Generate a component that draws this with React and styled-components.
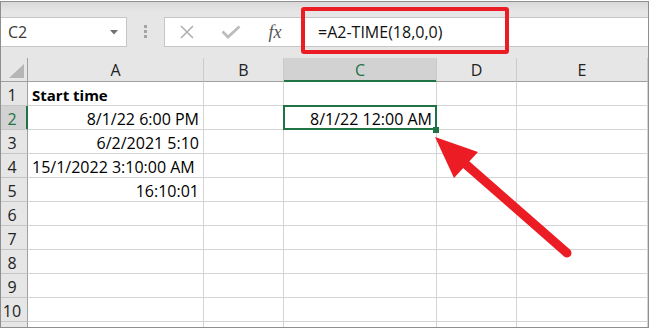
import React from "react";
import styled, { createGlobalStyle, css } from "styled-components";

const Global = createGlobalStyle`
  html, body { margin: 0; padding: 0; background: #fff; overflow: hidden; }
`;

const GREEN = "#217346";
const RED = "#ec1c24";

const Page = styled.div`
  position: relative;
  width: 649px;
  height: 328px;
  padding-top: 1px;
  box-sizing: border-box;
  font-family: "Open Sans", "Liberation Sans", sans-serif;
`;

const Window = styled.div`
  height: 327px;
  border: 1px solid #8e8e8e;
  box-sizing: border-box;
  display: flex;
  flex-direction: column;
  overflow: hidden;
  background: #e6e6e6;
`;

const FormulaBar = styled.div`
  position: relative;
  flex: none;
  height: 56px;
  box-sizing: border-box;
  padding-top: 15px;
  display: flex;
  align-items: flex-start;
  background: linear-gradient(#d9d9d9, #e6e6e6 10px);
`;

const NameBox = styled.div`
  width: 126px;
  height: 30px;
  box-sizing: border-box;
  background: #fff;
  border: 1px solid #c6c6c6;
  border-left: none;
  display: flex;
  align-items: center;
  justify-content: space-between;
  padding: 0 8px 0 7px;
  font-size: 16px;
  color: #3a3a3a;
`;

const Dots = styled.div`
  margin: 8px 0 0 17px;
  display: flex;
  flex-direction: column;
  gap: 2px;
  span {
    width: 3px;
    height: 3px;
    background: #a3a3a3;
  }
`;

const FormulaBox = styled.div`
  flex: 1;
  margin-left: 17px;
  height: 30px;
  box-sizing: border-box;
  background: #fff;
  border: 1px solid #c6c6c6;
  border-right: none;
  display: flex;
  align-items: center;
`;

const IconSlot = styled.div`
  width: 44px;
  height: 28px;
  display: flex;
  align-items: center;
  justify-content: center;
  flex: none;
`;

const Fx = styled.span`
  font-family: "Liberation Serif", serif;
  font-style: italic;
  font-size: 18px;
  color: #555;
  line-height: 1;
`;

const FormulaText = styled.div`
  padding-left: 21px;
  font-size: 16px;
  line-height: 28px;
  color: #111;
`;

const Callout = styled.div`
  position: absolute;
  left: 300px;
  top: 5px;
  width: 208px;
  height: 47px;
  box-sizing: border-box;
  border: 4px solid ${RED};
  border-radius: 3px;
  pointer-events: none;
`;

const Sheet = styled.div`
  flex: 1;
  overflow: hidden;
  display: grid;
  grid-template-columns: 27px 176px 80px 153px 80px 1fr;
  grid-auto-rows: 24px;
  background: #fff;
`;

const Corner = styled.div`
  background: #e6e6e6;
  border-right: 1px solid #a0a0a0;
  border-bottom: 1px solid #a0a0a0;
  display: flex;
  align-items: flex-end;
  justify-content: flex-end;
  padding: 0 3px 3px 0;
`;

const ColHead = styled.div`
  background: ${(p) => (p.$active ? "#d2d2d2" : "#e6e6e6")};
  border-right: 1px solid #cacaca;
  border-bottom: 1px solid ${(p) => (p.$active ? GREEN : "#a0a0a0")};
  box-shadow: ${(p) => (p.$active ? `inset 0 -1px 0 ${GREEN}` : "none")};
  display: flex;
  align-items: flex-end;
  justify-content: center;
  padding-bottom: 1px;
  font-size: 16px;
  line-height: 20px;
  color: ${(p) => (p.$active ? GREEN : "#222")};
`;

const RowHead = styled.div`
  background: ${(p) => (p.$active ? "#d2d2d2" : "#e6e6e6")};
  border-right: 1px solid ${(p) => (p.$active ? GREEN : "#a0a0a0")};
  border-bottom: 1px solid #c6c6c6;
  box-shadow: ${(p) => (p.$active ? `inset -1px 0 0 ${GREEN}` : "none")};
  display: flex;
  align-items: flex-end;
  justify-content: center;
  padding-right: 4px;
  font-size: 16px;
  line-height: 20px;
  color: ${(p) => (p.$active ? GREEN : "#222")};
`;

const Cell = styled.div`
  position: relative;
  border-right: 1px solid #d4d4d4;
  border-bottom: 1px solid #d4d4d4;
  display: flex;
  align-items: flex-end;
  justify-content: ${(p) => (p.$align === "right" ? "flex-end" : "flex-start")};
  padding: 0 4px;
  font-size: ${(p) => (p.$bold ? "15px" : "16px")};
  font-weight: ${(p) => (p.$bold ? 700 : 400)};
  line-height: 20px;
  color: #000;
  white-space: nowrap;
  ${(p) =>
    p.$selected &&
    css`
      z-index: 2;
      &::after {
        content: "";
        position: absolute;
        top: -1px;
        left: -1px;
        right: -1px;
        bottom: -1px;
        border: 2px solid ${GREEN};
      }
    `}
`;

const FillHandle = styled.span`
  position: absolute;
  right: -3px;
  bottom: -4px;
  width: 6px;
  height: 6px;
  background: ${GREEN};
  z-index: 3;
`;

const ArrowLayer = styled.svg`
  position: absolute;
  left: 0;
  top: 0;
  width: 649px;
  height: 328px;
  pointer-events: none;
`;

const columns = ["A", "B", "C", "D", "E"];

const data = {
  1: { A: { text: "Start time", bold: true } },
  2: { A: { text: "8/1/22 6:00 PM", align: "right" }, C: { text: "8/1/22 12:00 AM", align: "right", selected: true } },
  3: { A: { text: "6/2/2021 5:10", align: "right" } },
  4: { A: { text: "15/1/2022 3:10:00 AM" } },
  5: { A: { text: "16:10:01", align: "right" } },
};

export default function App() {
  const rows = Array.from({ length: 11 }, (_, i) => i + 1);
  return (
    <Page>
      <Global />
      <Window>
        <FormulaBar>
          <NameBox>
            <span>C2</span>
            <svg width="8" height="5" viewBox="0 0 8 5">
              <path d="M0 0 H8 L4 4.5 Z" fill="#707070" />
            </svg>
          </NameBox>
          <Dots>
            <span />
            <span />
            <span />
          </Dots>
          <FormulaBox>
            <IconSlot>
              <svg width="14" height="14" viewBox="0 0 14 14">
                <path d="M1 1 L13 13 M13 1 L1 13" stroke="#b0b0b0" strokeWidth="1.6" fill="none" />
              </svg>
            </IconSlot>
            <IconSlot>
              <svg width="20" height="14" viewBox="0 0 20 14">
                <path d="M1.5 6.5 L7 12 L18.5 1.5" stroke="#bcbcbc" strokeWidth="2.8" fill="none" />
              </svg>
            </IconSlot>
            <IconSlot>
              <Fx>fx</Fx>
            </IconSlot>
            <FormulaText>=A2-TIME(18,0,0)</FormulaText>
          </FormulaBox>
          <Callout />
        </FormulaBar>
        <Sheet>
          <Corner>
            <svg width="15" height="14" viewBox="0 0 15 14">
              <path d="M15 0 V14 H0 Z" fill="#b5b5b5" />
            </svg>
          </Corner>
          {columns.map((c) => (
            <ColHead key={c} $active={c === "C"}>
              {c}
            </ColHead>
          ))}
          {rows.map((r) => (
            <React.Fragment key={r}>
              <RowHead $active={r === 2}>{r <= 10 ? r : null}</RowHead>
              {columns.map((c) => {
                const d = data[r] && data[r][c];
                return (
                  <Cell key={c} $align={d && d.align} $bold={d && d.bold} $selected={d && d.selected}>
                    {d ? d.text : null}
                    {d && d.selected ? <FillHandle /> : null}
                  </Cell>
                );
              })}
            </React.Fragment>
          ))}
        </Sheet>
      </Window>
      <ArrowLayer viewBox="0 0 649 328">
        <line x1="462" y1="161" x2="567" y2="253" stroke={RED} strokeWidth="9" strokeLinecap="round" />
        <polygon points="435,137 478,152 454,178" fill={RED} />
      </ArrowLayer>
    </Page>
  );
}
